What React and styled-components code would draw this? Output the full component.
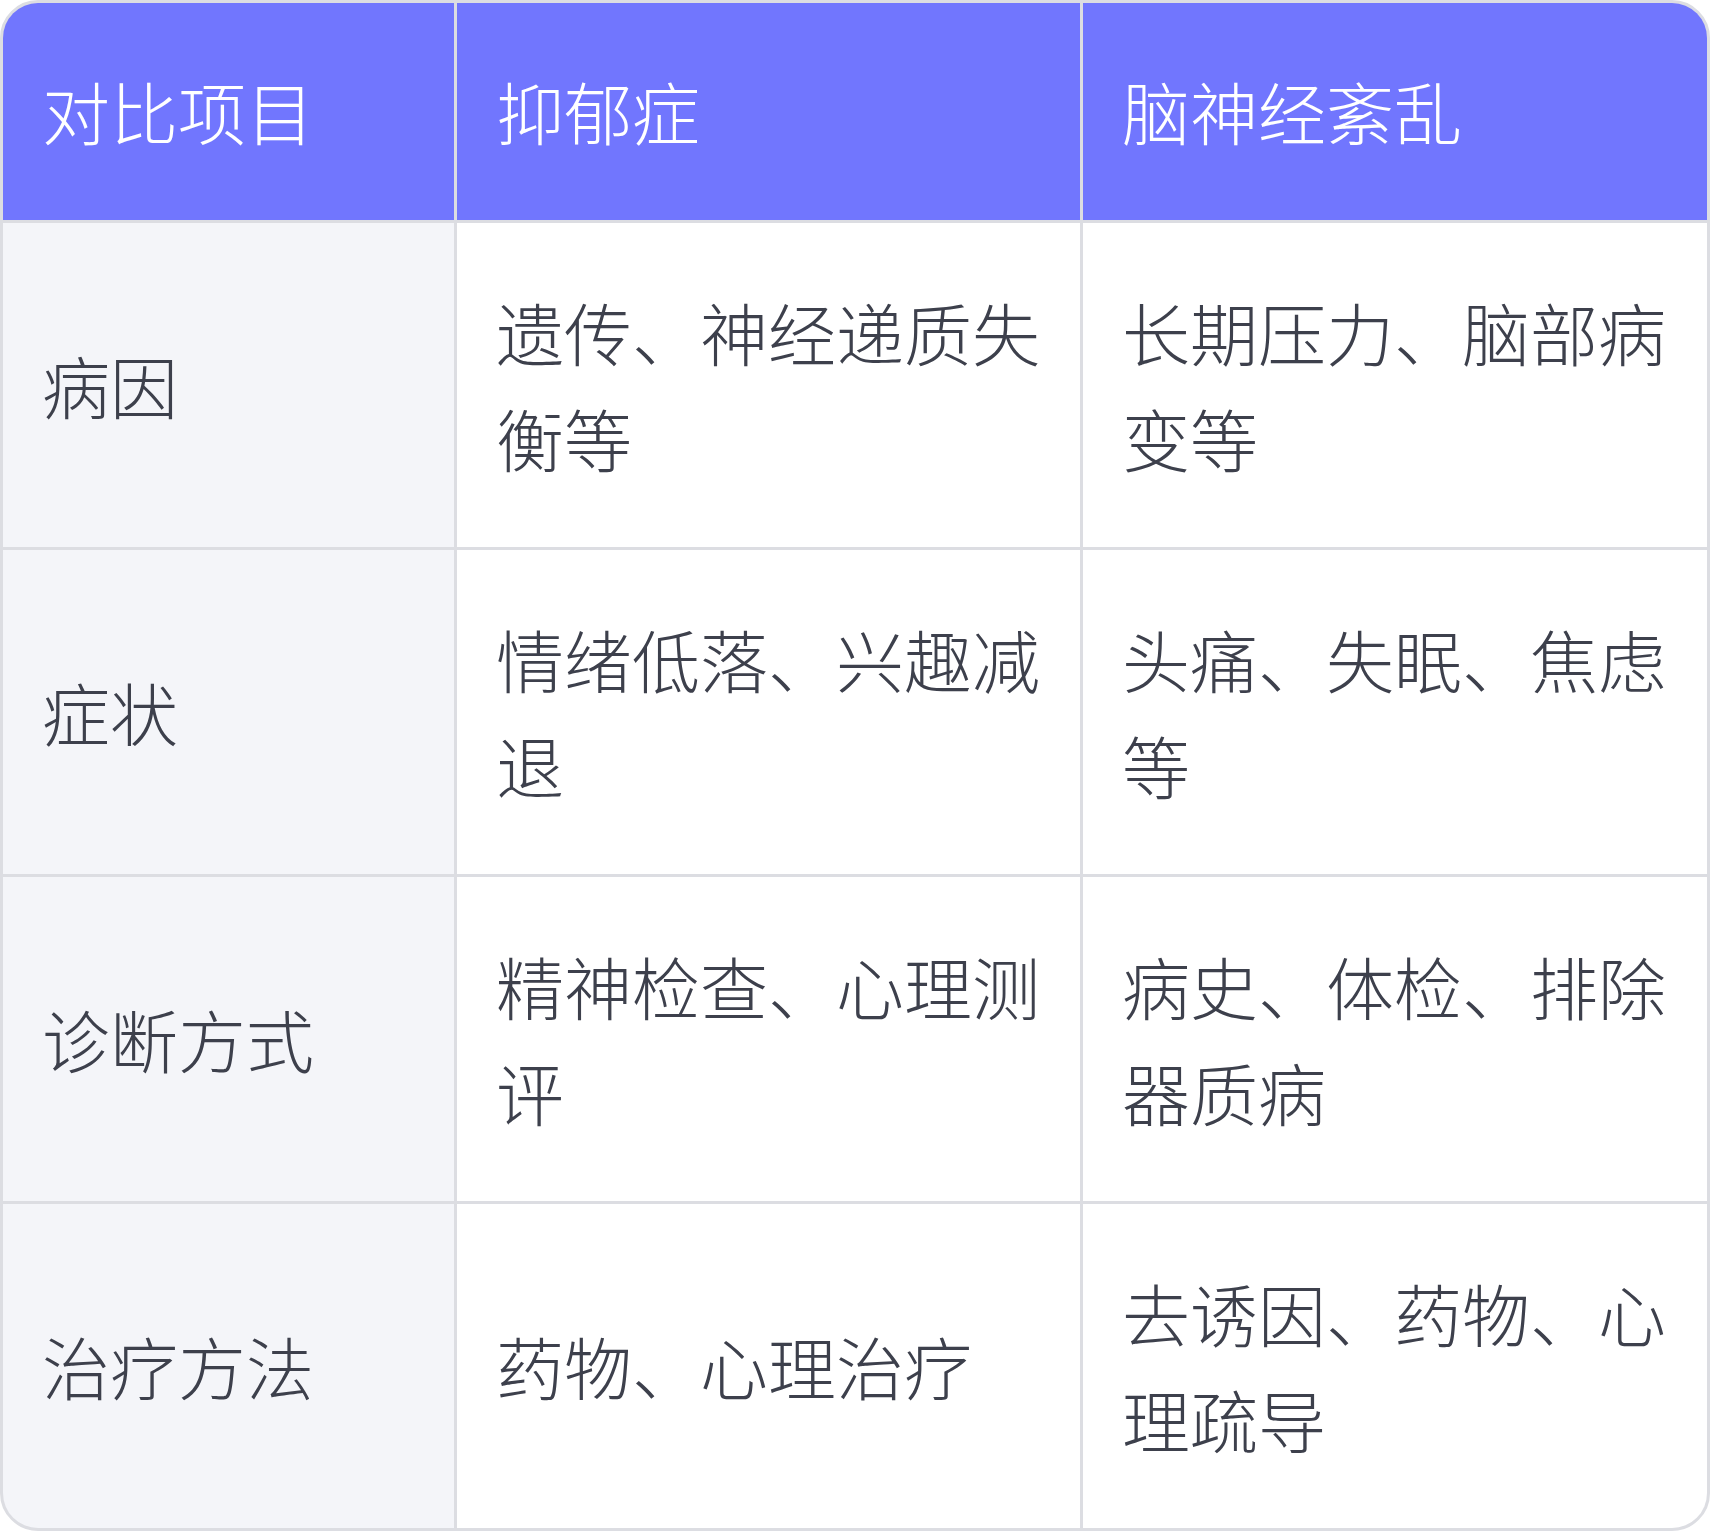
import React from 'react';
import styled, { createGlobalStyle } from 'styled-components';

const rows = [
  { label: '病因', a: '遗传、神经递质失衡等', b: '长期压力、脑部病变等' },
  { label: '症状', a: '情绪低落、兴趣减退', b: '头痛、失眠、焦虑等' },
  { label: '诊断方式', a: '精神检查、心理测评', b: '病史、体检、排除器质病' },
  { label: '治疗方法', a: '药物、心理治疗', b: '去诱因、药物、心理疏导' },
];

const App = () => {
  return (
    <>
      <GlobalStyle />
      <Wrap>
        <Grid>
          <HeadCell>对比项目</HeadCell>
          <HeadCell>抑郁症</HeadCell>
          <HeadCell>脑神经紊乱</HeadCell>
          {rows.map((row) => (
            <React.Fragment key={row.label}>
              <Cell $label>{row.label}</Cell>
              <Cell>{row.a}</Cell>
              <Cell>{row.b}</Cell>
            </React.Fragment>
          ))}
        </Grid>
      </Wrap>
    </>
  );
};

const GlobalStyle = createGlobalStyle`
  html, body {
    margin: 0;
    padding: 0;
    background: #ffffff;
  }
  body {
    font-family: "Noto Sans CJK SC", "Noto Sans", sans-serif;
  }
`;

const Wrap = styled.div`
  width: 1710px;
  height: 1531px;
  box-sizing: border-box;
  border: 3px solid #dcdde2;
  border-radius: 38px;
  overflow: hidden;
  background: #dcdde2;
`;

const Grid = styled.div`
  display: grid;
  grid-template-columns: 451px 623px 1fr;
  grid-template-rows: 217px repeat(4, 324px);
  gap: 3px;
  height: 100%;
`;

const HeadCell = styled.div`
  display: flex;
  align-items: center;
  padding: 0 38px 0 39px;
  background: #7176fe;
  color: #ffffff;
  font-size: 68px;
  font-weight: 300;
  line-height: 1.56;
`;

const Cell = styled.div`
  display: flex;
  align-items: center;
  padding: 0 36px 0 39px;
  background: ${(p) => (p.$label ? '#f4f5f9' : '#ffffff')};
  color: #3d404c;
  font-size: 68px;
  font-weight: 300;
  line-height: 1.56;
`;

export default App;
